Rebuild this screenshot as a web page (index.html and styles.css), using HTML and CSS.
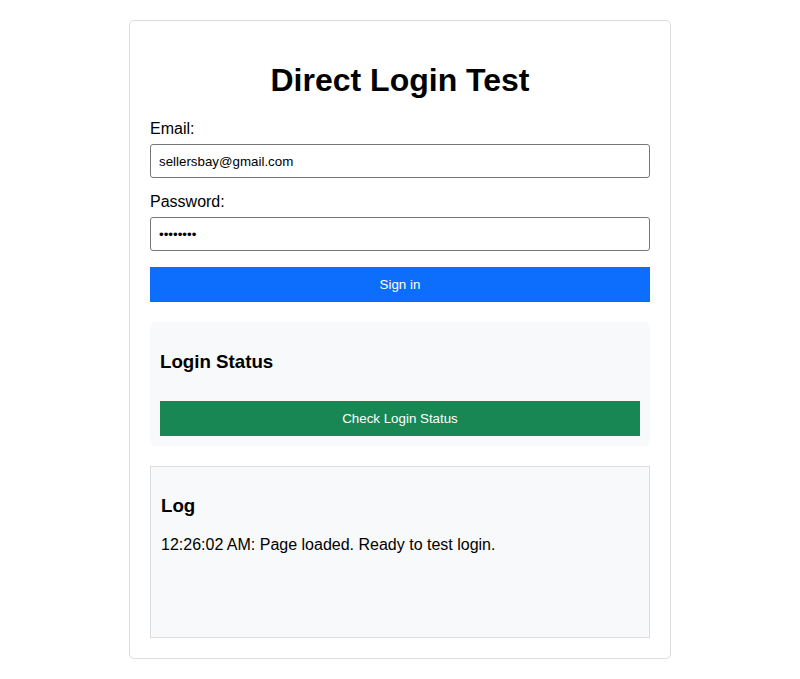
FILE: index.html
```html
<!DOCTYPE html>
<html>
<head>
<meta charset="utf-8">
<title>Direct Login Test</title>
<link rel="stylesheet" href="styles.css">
</head>
<body>
<div class="card">
  <h1 class="title">Direct Login Test</h1>
  <div class="form-group">
    <label class="label" for="email">Email:</label>
    <input class="input" id="email" type="email" value="sellersbay@gmail.com">
  </div>
  <div class="form-group">
    <label class="label" for="password">Password:</label>
    <input class="input" id="password" type="password" value="password">
  </div>
  <button class="btn btn-primary" type="button">Sign in</button>
  <div class="status">
    <h3 class="section-title">Login Status</h3>
    <button class="btn btn-success" type="button">Check Login Status</button>
  </div>
  <div class="log">
    <h3 class="section-title">Log</h3>
    <div class="log-entry">12:26:02 AM: Page loaded. Ready to test login.</div>
  </div>
</div>
</body>
</html>
```

FILE: styles.css
```css
html, body {
  margin: 0;
  padding: 0;
  background: #ffffff;
}
body {
  font-family: "Liberation Sans", Arial, sans-serif;
  color: #000;
  padding-top: 20px;
  padding-bottom: 20px;
}
.card {
  width: 500px;
  margin: 0 auto;
  padding: 20px;
  border: 1px solid #dddddd;
  border-radius: 5px;
}
.title {
  text-align: center;
  font-size: 32px;
  font-weight: bold;
  margin: 21px 0 21px;
}
.form-group {
  margin-bottom: 15px;
}
.label {
  display: block;
  font-size: 16px;
  margin-bottom: 6px;
}
.input {
  display: block;
  box-sizing: border-box;
  width: 100%;
  height: 34px;
  padding: 0 8px;
  font-family: "Liberation Sans", Arial, sans-serif;
  font-size: 13.33px;
  border: 1px solid #767676;
  border-radius: 3px;
  color: #000;
}
.btn {
  display: block;
  width: 100%;
  box-sizing: border-box;
  padding: 10px;
  border: none;
  color: #fff;
  font-family: "Liberation Sans", Arial, sans-serif;
  font-size: 13.33px;
}
.btn-primary {
  background: #0d6efd;
  margin-top: 16px;
}
.form-group + .btn-primary {
  margin-top: 16px;
}
.btn-success {
  background: #198754;
  margin-top: 28px;
}
.status {
  margin-top: 20px;
  padding: 10px;
  background: #f8f9fa;
  border-radius: 5px;
}
.section-title {
  font-size: 18.72px;
  font-weight: bold;
  margin: 18.72px 0;
}
.log {
  margin-top: 20px;
  padding: 10px;
  height: 150px;
  background: #f8f9fa;
  border: 1px solid #dddddd;
}
.log-entry {
  font-size: 16px;
}
```
